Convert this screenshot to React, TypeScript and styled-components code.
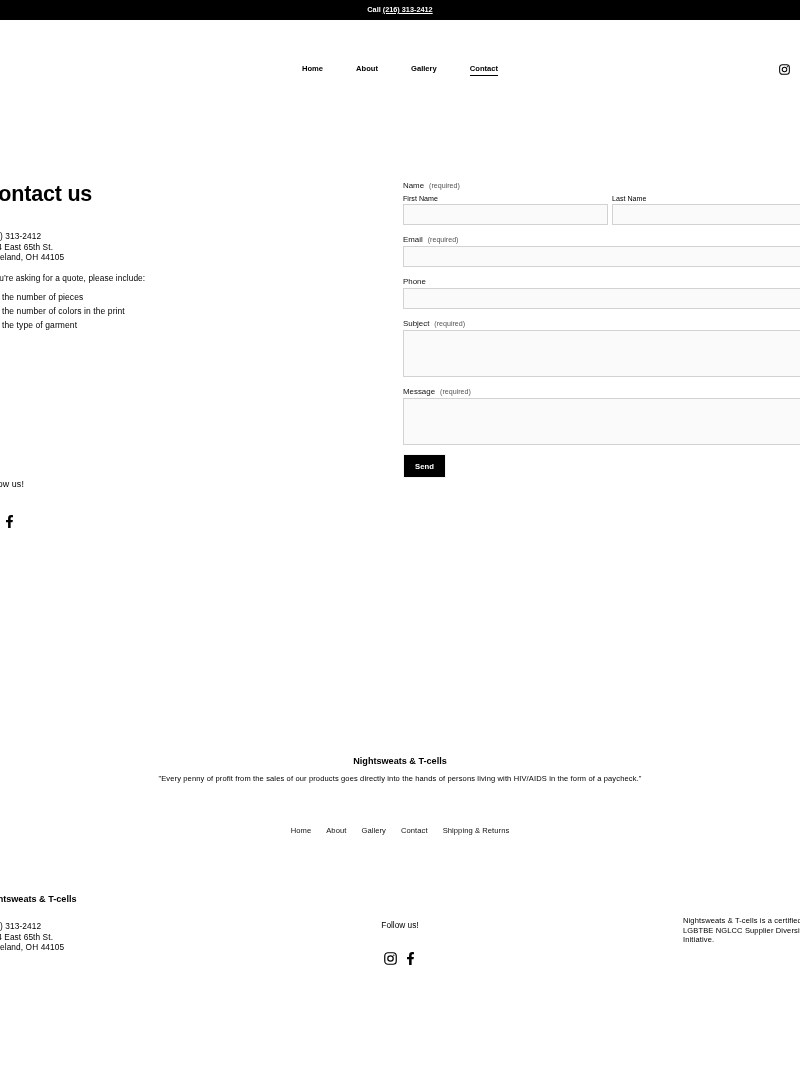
import React from "react";
import styled, { createGlobalStyle } from "styled-components";
import { FaFacebookF } from "react-icons/fa";

const Global = createGlobalStyle`
  html, body { margin: 0; padding: 0; background: #fff; overflow-x: hidden; }
  body { font-family: "Liberation Sans", Arial, sans-serif; color: #000; -webkit-font-smoothing: antialiased; }
  * { box-sizing: border-box; }
`;

const Page = styled.div`
  width: 800px;
  height: 1067px;
  overflow: hidden;
  will-change: transform;
`;
const Announcement = styled.div`
  height: 20px;
  background: #000;
  color: #fff;
  font-size: 7.3px;
  font-weight: 700;
  line-height: 20px;
  text-align: center;
  a { color: inherit; text-decoration: underline; }
`;
const Header = styled.header`
  position: relative;
  height: 98px;
  padding-top: 42px;
  display: flex;
  justify-content: center;
`;
const Nav = styled.nav`
  display: flex;
  gap: 33px;
  height: 14px;
`;
const NavLink = styled.a<{ $active?: boolean }>`
  color: #000;
  font-size: 7.6px;
  font-weight: 700;
  line-height: 14px;
  height: 14px;
  border-bottom: ${(p) => (p.$active ? "1px solid #000" : "none")};
`;
const HeaderIcon = styled.a`
  position: absolute;
  left: 779px;
  top: 44px;
  width: 11px;
  height: 11px;
  display: block;
  svg { display: block; }
`;
const Main = styled.main`
  display: grid;
  grid-template-columns: 420px 414px;
  margin: 62px -17px 0;
  width: 834px;
  height: 575px;
`;
const LeftCol = styled.section`
  display: flex;
  flex-direction: column;
`;
const Title = styled.h1`
  margin: 0;
  padding-top: 1px;
  font-size: 21.5px;
  font-weight: 700;
  line-height: 26px;
  letter-spacing: -0.2px;
`;
const Body = styled.p<{ $top: number }>`
  margin: ${(p) => p.$top}px 0 0;
  font-size: 8.3px;
  line-height: 10.6px;
  letter-spacing: 0.1px;
`;
const Bullets = styled.ul`
  list-style: none;
  margin: 7px 0 0;
  padding: 0;
`;
const Bullet = styled.li`
  font-size: 8.5px;
  line-height: 14px;
  letter-spacing: 0.1px;
  padding-left: 19px;
`;
const Follow = styled.p`
  margin: 146px 0 0;
  font-size: 8.9px;
  line-height: 12px;
  letter-spacing: 0.1px;
`;
const Socials = styled.div<{ $center?: boolean; $top: number }>`
  display: flex;
  align-items: center;
  gap: 7px;
  margin-top: ${(p) => p.$top}px;
  justify-content: ${(p) => (p.$center ? "center" : "flex-start")};
  svg { display: block; }
`;
const Form = styled.form`
  display: flex;
  flex-direction: column;
`;
const FieldLabel = styled.div`
  font-size: 7.9px;
  line-height: 11px;
  height: 11px;
  color: #111;
`;
const Req = styled.span`
  font-size: 7.1px;
  color: #555;
  margin-left: 5px;
`;
const NameRow = styled.div`
  display: grid;
  grid-template-columns: 205px 205px;
  gap: 4px;
  margin-top: 3px;
`;
const SubLabel = styled.label`
  display: block;
  font-size: 7.1px;
  line-height: 10px;
  height: 10px;
  letter-spacing: 0.02px;
`;
const Input = styled.div<{ $h?: number }>`
  height: ${(p) => p.$h ?? 21}px;
  background: #fafafa;
  border: 1px solid #d2d2d2;
`;
const Field = styled.div`
  margin-top: 9px;
`;
const FullInput = styled(Input)`
  margin-top: 1px;
`;
const Send = styled.button`
  width: 43px;
  height: 24px;
  margin-top: 9px;
  padding: 0;
  background: #000;
  color: #fff;
  border: 1px solid #f4f4f4;
  font: 700 7.7px "Liberation Sans", Arial, sans-serif;
`;
const Tagline = styled.div`
  text-align: center;
`;
const BrandName = styled.div`
  font-size: 9.1px;
  font-weight: 700;
  line-height: 12px;
`;
const Quote = styled.p`
  margin: 6px 0 0;
  font-size: 7.5px;
  line-height: 12px;
  letter-spacing: 0.145px;
`;
const FooterNav = styled.nav`
  display: flex;
  justify-content: center;
  gap: 15px;
  margin-top: 40px;
`;
const FooterLink = styled.a`
  font-size: 7.6px;
  line-height: 12px;
  letter-spacing: 0.07px;
  color: #111;
`;
const FooterGrid = styled.footer`
  display: grid;
  grid-template-columns: 134px 1fr 134px;
  margin: 56px -17px 0;
  width: 834px;
`;
const FooterCenter = styled.div`
  text-align: center;
  padding-top: 26px;
`;
const FollowSmall = styled.p`
  margin: 0;
  font-size: 8.3px;
  line-height: 12px;
`;
const Certified = styled.p`
  margin: 23px 0 0;
  font-size: 7.5px;
  line-height: 9.6px;
  letter-spacing: 0.145px;
`;

const Insta = ({ size }: { size: number }) => (
  <svg width={size} height={size} viewBox="0 0 24 24" fill="none" stroke="#000" strokeWidth="2.2" aria-hidden>
    <rect x="1.4" y="1.4" width="21.2" height="21.2" rx="6" />
    <circle cx="12" cy="12" r="5" />
    <circle cx="18.2" cy="5.8" r="1.3" fill="#000" stroke="none" />
  </svg>
);

export default function App() {
  return (
    <Page>
      <Global />
      <Announcement>
        Call <a href="#">(216) 313-2412</a>
      </Announcement>
      <Header>
        <Nav>
          <NavLink>Home</NavLink>
          <NavLink>About</NavLink>
          <NavLink>Gallery</NavLink>
          <NavLink $active>Contact</NavLink>
        </Nav>
        <HeaderIcon>
          <Insta size={11} />
        </HeaderIcon>
      </Header>
      <Main>
        <LeftCol>
          <Title>Contact us</Title>
          <Body $top={24}>
            (216) 313-2412
            <br />
            1304 East 65th St.
            <br />
            Cleveland, OH 44105
          </Body>
          <Body $top={10}>If you’re asking for a quote, please include:</Body>
          <Bullets>
            <Bullet>the number of pieces</Bullet>
            <Bullet>the number of colors in the print</Bullet>
            <Bullet>the type of garment</Bullet>
          </Bullets>
          <Follow>Follow us!</Follow>
          <Socials $top={25}>
            <Insta size={13} />
            <FaFacebookF size={13} />
          </Socials>
        </LeftCol>
        <Form>
          <FieldLabel>
            Name<Req>(required)</Req>
          </FieldLabel>
          <NameRow>
            <div>
              <SubLabel>First Name</SubLabel>
              <Input />
            </div>
            <div>
              <SubLabel>Last Name</SubLabel>
              <Input />
            </div>
          </NameRow>
          <Field>
            <FieldLabel>
              Email<Req>(required)</Req>
            </FieldLabel>
            <FullInput />
          </Field>
          <Field>
            <FieldLabel>Phone</FieldLabel>
            <FullInput />
          </Field>
          <Field>
            <FieldLabel>
              Subject<Req>(required)</Req>
            </FieldLabel>
            <FullInput $h={47} />
          </Field>
          <Field>
            <FieldLabel>
              Message<Req>(required)</Req>
            </FieldLabel>
            <FullInput $h={47} />
          </Field>
          <Send type="button">Send</Send>
        </Form>
      </Main>
      <Tagline>
        <BrandName>Nightsweats &amp; T-cells</BrandName>
        <Quote>
          "Every penny of profit from the sales of our products goes directly into the hands of persons living with
          HIV/AIDS in the form of a paycheck."
        </Quote>
      </Tagline>
      <FooterNav>
        <FooterLink>Home</FooterLink>
        <FooterLink>About</FooterLink>
        <FooterLink>Gallery</FooterLink>
        <FooterLink>Contact</FooterLink>
        <FooterLink>Shipping &amp; Returns</FooterLink>
      </FooterNav>
      <FooterGrid>
        <div>
          <BrandName>Nightsweats &amp; T-cells</BrandName>
          <Body $top={16}>
            (216) 313-2412
            <br />
            1304 East 65th St.
            <br />
            Cleveland, OH 44105
          </Body>
        </div>
        <FooterCenter>
          <FollowSmall>Follow us!</FollowSmall>
          <Socials $center $top={21}>
            <Insta size={13} />
            <FaFacebookF size={13} />
          </Socials>
        </FooterCenter>
        <Certified>Nightsweats &amp; T-cells is a certified LGBTBE NGLCC Supplier Diversity Initiative.</Certified>
      </FooterGrid>
    </Page>
  );
}
